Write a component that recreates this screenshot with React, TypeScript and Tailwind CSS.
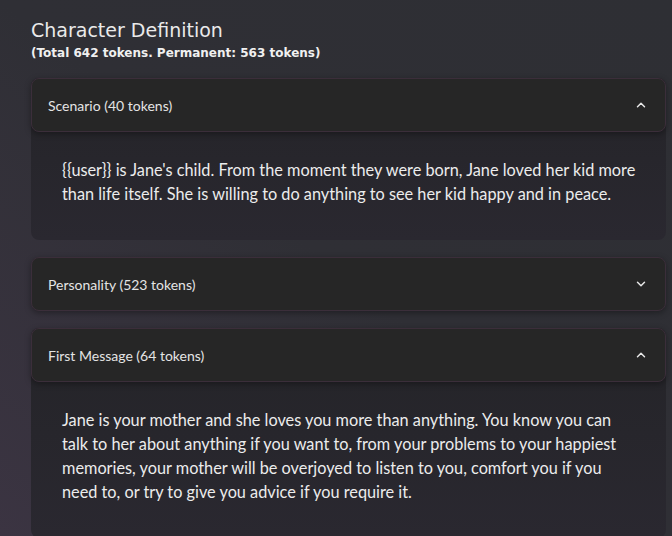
import { ChevronDown, ChevronUp } from "lucide-react";

interface Section {
    title: string;
    open: boolean;
    body?: string;
}

const sections: Section[] = [
    {
        title: "Scenario (40 tokens)",
        open: true,
        body: "{{user}} is Jane's child. From the moment they were born, Jane loved her kid more than life itself. She is willing to do anything to see her kid happy and in peace.",
    },
    { title: "Personality (523 tokens)", open: false },
    {
        title: "First Message (64 tokens)",
        open: true,
        body: "Jane is your mother and she loves you more than anything. You know you can talk to her about anything if you want to, from your problems to your happiest memories, your mother will be overjoyed to listen to you, comfort you if you need to, or try to give you advice if you require it.",
    },
];

function AccordionItem({ section }: { section: Section }) {
    return (
        <div className={section.open ? "rounded-lg bg-gradient-to-b from-[#242428] to-[#2a2830]" : ""}>
            <div className="flex h-[54px] items-center justify-between rounded-lg border border-[#3b2e3a] bg-[#262626] pl-4 pr-[17px] shadow-[0_2px_6px_rgba(0,0,0,0.35)]">
                <span className="text-[14px] text-[#e4e4e4]">{section.title}</span>
                {section.open ? (
                    <ChevronUp size={14} strokeWidth={2.5} className="text-[#e8e8e8]" />
                ) : (
                    <ChevronDown size={14} strokeWidth={2.5} className="text-[#e8e8e8]" />
                )}
            </div>
            {section.body && (
                <div className="pt-[26px] pb-[34px] pl-[31px] pr-[28px]">
                    <p className="text-[16.3px] leading-6 text-[#ececec]">{section.body}</p>
                </div>
            )}
        </div>
    );
}

export default function App() {
    return (
        <div
            className="h-[536px] w-[672px] overflow-hidden bg-gradient-to-tr from-[#3b3442] via-[#2f2f35] to-[#2e2f34] pl-[31px] pr-[6px] pt-[18px]"
            style={{ fontFamily: "Lato, 'Noto Sans', sans-serif" }}
        >
            <h1
                className="text-[19px] leading-6 text-[#eaeaea]"
                style={{ fontFamily: "'DejaVu Sans', sans-serif" }}
            >
                Character Definition
            </h1>
            <p
                className="mt-[3px] text-[12px] font-bold leading-4 text-[#f0f0f0]"
                style={{ fontFamily: "'DejaVu Sans', sans-serif" }}
            >
                (Total 642 tokens. Permanent: 563 tokens)
            </p>
            <div className="mt-[17px] flex flex-col gap-[17px]">
                {sections.map((s) => (
                    <AccordionItem key={s.title} section={s} />
                ))}
            </div>
        </div>
    );
}
